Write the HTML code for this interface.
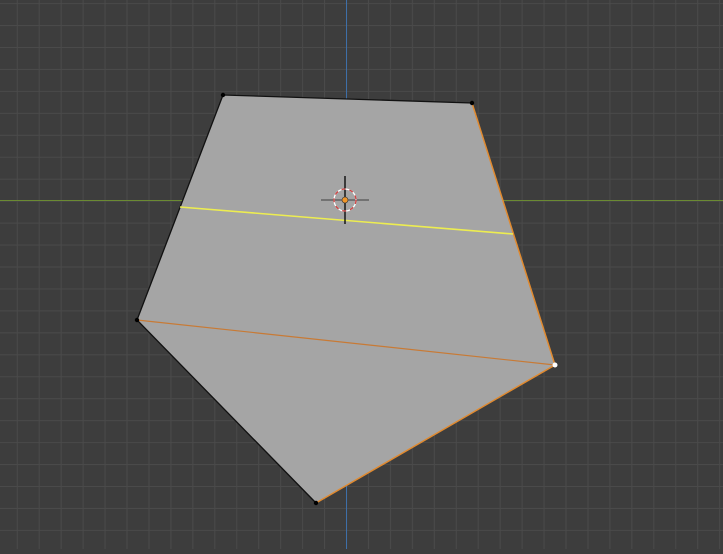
<!DOCTYPE html>
<html><head><style>html,body{margin:0;padding:0;background:#3d3d3d;overflow:hidden}</style></head>
<body>
<svg width="723" height="549" viewBox="0 0 723 549" xmlns="http://www.w3.org/2000/svg">
<defs>
<pattern id="g" x="16.75" y="3.1" width="21.95" height="21.95" patternUnits="userSpaceOnUse">
<path d="M0.5 0V21.95M0 0.5H21.95" stroke="#4a4a4a" stroke-width="1" fill="none"/>
</pattern>
</defs>
<rect width="723" height="549" fill="#3d3d3d"/>
<rect width="723" height="549" fill="url(#g)"/>
<line x1="0" y1="200.5" x2="723" y2="200.5" stroke="#6b8a33" stroke-width="1"/>
<line x1="346.5" y1="0" x2="346.5" y2="549" stroke="#3e6fa8" stroke-width="1"/>
<polygon points="223,95 472,103 555,365 316,503 137,320" fill="#a5a5a5"/>
<polyline points="472,103 223,95 137,320 316,503" fill="none" stroke="#111" stroke-width="1.3"/>
<line x1="137" y1="320" x2="555" y2="365" stroke="#c87a35" stroke-width="1.2"/>
<polyline points="472,103 555,365 316,503" fill="none" stroke="#e08a30" stroke-width="1.5"/>
<line x1="180" y1="207" x2="513" y2="234" stroke="#eded50" stroke-width="1.6"/>
<g fill="#000"><circle cx="223" cy="95" r="2.2"/><circle cx="472" cy="103" r="2.2"/><circle cx="137" cy="320" r="2.2"/><circle cx="316" cy="503" r="2.2"/></g>
<circle cx="555" cy="365" r="2.5" fill="#fff"/>
<g>
<line x1="321" y1="200" x2="369" y2="200" stroke="#555" stroke-width="1.2"/>
<line x1="345" y1="176" x2="345" y2="224" stroke="#000" stroke-width="1.3"/>
<circle cx="345" cy="200" r="11" fill="none" stroke="#fff" stroke-width="1.3"/>
<circle cx="345" cy="200" r="11" fill="none" stroke="#d04040" stroke-width="1.3" stroke-dasharray="4 4"/>
<circle cx="345" cy="200" r="3" fill="#f0962a" stroke="#333" stroke-width="0.6"/>
</g>
</svg>
</body></html>
